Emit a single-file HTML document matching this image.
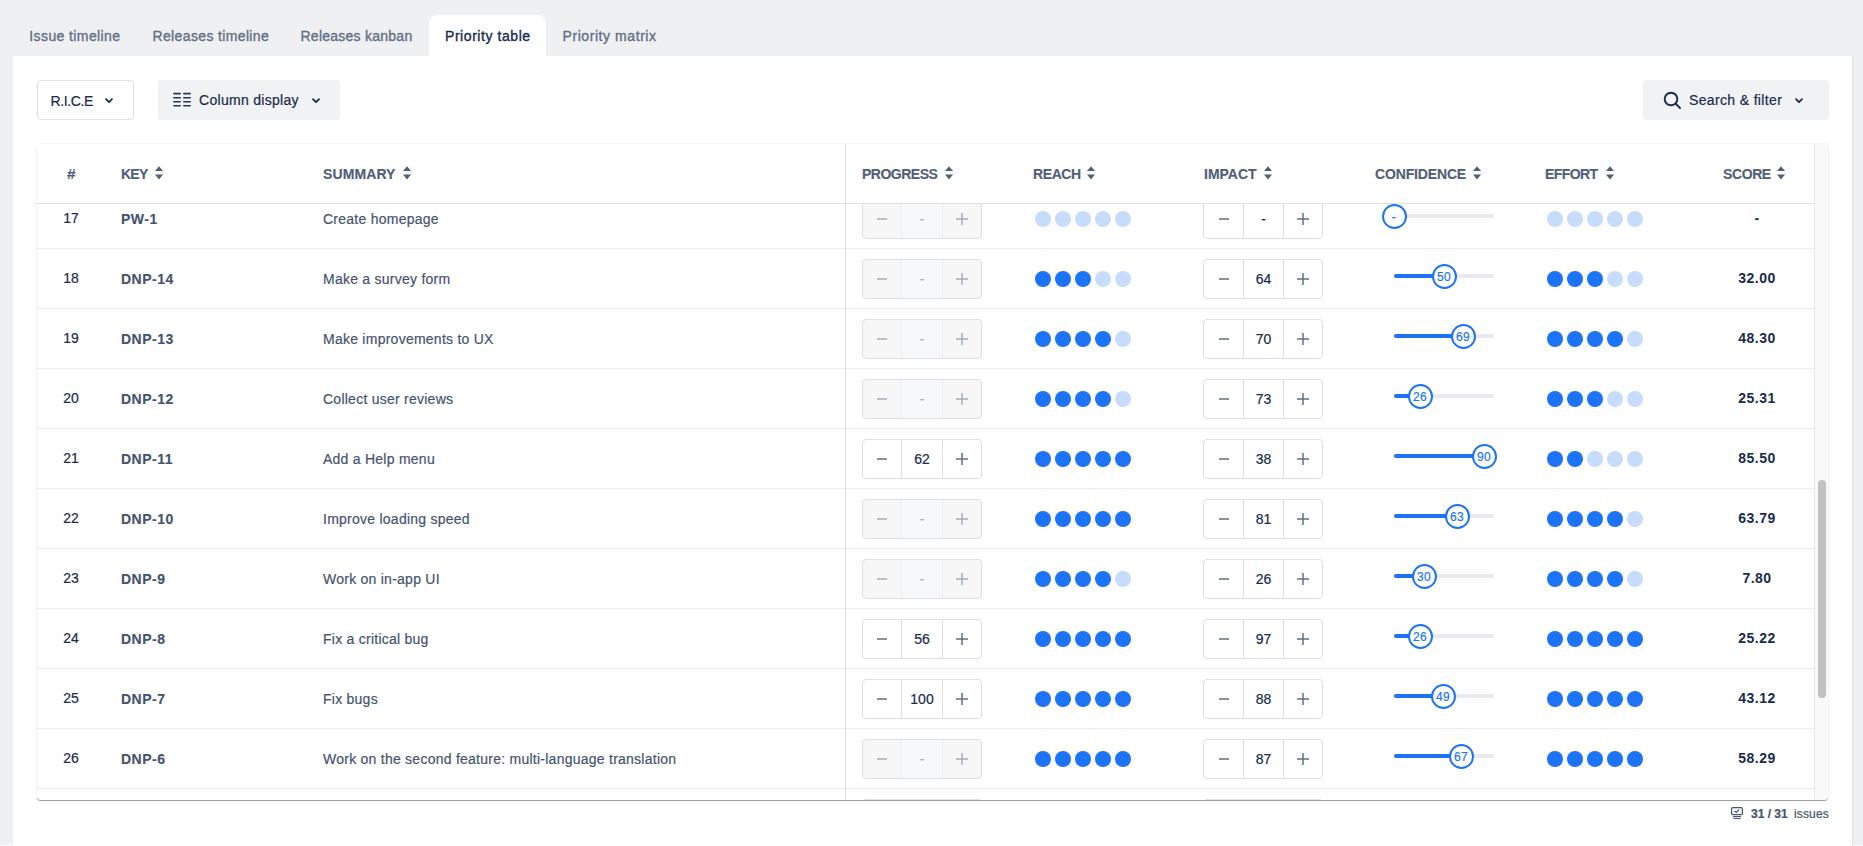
<!DOCTYPE html>
<html><head><meta charset="utf-8">
<style>
*{box-sizing:border-box;}
html,body{margin:0;padding:0;}
body{width:1863px;height:846px;overflow:hidden;position:relative;background:#eef0f2;font-family:"Liberation Sans",sans-serif;font-size:14px;color:#172b4d;-webkit-text-stroke:0.2px currentColor;}
.hcell,.key{-webkit-text-stroke:0.15px currentColor;} .score{-webkit-text-stroke:0;}
.abs{position:absolute;}
.tabbg{position:absolute;left:429px;top:15px;width:117px;height:41px;background:#fff;border-radius:8px 8px 0 0;}
.tab{position:absolute;top:28px;line-height:16px;color:#626f86;font-size:14px;white-space:nowrap;-webkit-text-stroke:0.35px currentColor;}
.tab.act{color:#172b4d;}
.panel{position:absolute;left:13px;top:56px;width:1839px;height:790px;background:#fff;}
.btn{position:absolute;top:80px;height:40px;border-radius:3px;color:#172b4d;font-size:14px;white-space:nowrap;}
.btn span{position:absolute;top:12px;line-height:16px;}
.card{position:absolute;left:37px;top:144px;width:1791px;height:656px;background:#fff;border-radius:4px;box-shadow:0 1px 0.5px rgba(0,0,0,0.33),0 1px 3px rgba(0,0,0,0.05),0 0 1.5px rgba(0,0,0,0.17);overflow:hidden;}
.wrap{position:absolute;left:-37px;top:-144px;width:1863px;height:846px;}
.hdr{position:absolute;top:0;height:60px;left:0;right:0;background:#fff;z-index:5;border-bottom:1px solid #dcdfe4;}
.hcell{position:absolute;top:166px;line-height:16px;font-weight:700;font-size:14px;color:#505f79;white-space:nowrap;}
.sort{position:absolute;top:166px;width:8px;height:14px;color:#505f79;line-height:0;}
.rowline{position:absolute;left:37px;width:1777px;height:1px;background:#ebecf0;}
.num{position:absolute;left:61px;width:20px;text-align:center;line-height:16px;color:#172b4d;}
.key{position:absolute;left:121px;line-height:16px;font-weight:700;color:#44546f;letter-spacing:0.5px;}
.summ{position:absolute;left:323px;line-height:16px;color:#44546f;letter-spacing:0.25px;white-space:nowrap;}
.stp{position:absolute;width:120px;height:40px;border:1px solid #dcdfe4;border-radius:4px;display:flex;overflow:hidden;background:#fff;}
.stp .sb{width:38px;height:38px;display:flex;align-items:center;justify-content:center;color:#626f86;}
.stp .sv{width:42px;height:38px;border-left:1px solid #dcdfe4;border-right:1px solid #dcdfe4;text-align:center;line-height:38px;color:#172b4d;}
.stp.dis{background:#f7f7f8;}
.stp.dis .sb{color:#a5adba;}
.stp.dis .sv{background:#f7f8fa;color:#a5adba;border-color:#ebecf0;}
.dots{position:absolute;height:16px;display:flex;gap:4px;}
.dots i{display:block;width:16px;height:16px;border-radius:50%;}
.dots i.on{background:#1d73f5;}
.dots i.off{background:#c7dcfb;}
.trk{position:absolute;left:1394px;width:100px;height:4px;border-radius:2px;background:#e9eaee;}
.fill{position:absolute;left:1394px;height:4px;border-radius:2px;background:#1d73f5;}
.thumb{position:absolute;width:25px;height:25px;border-radius:50%;border:2px solid #1d73f5;background:#fff;color:#1d73f5;font-size:12px;line-height:22px;text-align:center;letter-spacing:0.3px;}
.score{position:absolute;left:1700px;width:114px;text-align:center;line-height:16px;font-weight:700;color:#172b4d;letter-spacing:0.5px;}
.vdiv{position:absolute;left:808px;top:0;width:1px;height:656px;background:#dcdfe4;z-index:6;}
.sbtrack{position:absolute;left:1777px;top:0;width:14px;height:656px;background:#f9f9f9;border-left:1px solid #e8e8e8;z-index:7;}
.sbthumb{position:absolute;left:3px;top:336px;width:8px;height:218px;border-radius:4px;background:#c1c1c1;}
.foot{position:absolute;top:806px;left:1731px;height:14px;font-size:12px;color:#44546f;white-space:nowrap;}
.foot span{position:absolute;top:1px;line-height:14px;}
</style></head><body>
<div class="panel"></div>
<div class="abs" style="left:1852px;top:56px;width:1px;height:789px;background:#dfe0e4"></div>
<div class="abs" style="left:0;top:845px;width:1863px;height:1px;background:#fff"></div>
<div class="tabbg"></div>
<div class="tab" style="left:29.3px;letter-spacing:0.4px">Issue timeline</div>
<div class="tab" style="left:152.5px;letter-spacing:0.36px">Releases timeline</div>
<div class="tab" style="left:300.5px;letter-spacing:0.25px">Releases kanban</div>
<div class="tab act" style="left:445px;letter-spacing:0.56px">Priority table</div>
<div class="tab" style="left:562.5px;letter-spacing:0.57px">Priority matrix</div>

<div class="btn" style="left:37px;width:97px;border:1px solid #dcdfe4;border-radius:4px;">
  <span style="left:12.5px;top:12px;letter-spacing:-0.4px">R.I.C.E</span>
  <div class="abs" style="left:66px;top:16px;line-height:0"><svg width="10" height="8" viewBox="0 0 10 8"><path d="M2 2.2 L5 5.2 L8 2.2" stroke="#172b4d" stroke-width="1.8" fill="none" stroke-linecap="round" stroke-linejoin="round"/></svg></div>
</div>
<div class="btn" style="left:158px;width:182px;background:#f1f2f4;">
  <svg class="abs" style="left:15px;top:12px" width="18" height="15" viewBox="0 0 18 15"><g fill="#253858"><rect x="0" y="0.8" width="8" height="1.6" rx="0.8"/><rect x="0" y="4.9" width="8" height="1.6" rx="0.8"/><rect x="0" y="8.9" width="8" height="1.6" rx="0.8"/><rect x="0" y="13" width="8" height="1.6" rx="0.8"/><rect x="10" y="0.8" width="8" height="1.6" rx="0.8"/><rect x="10" y="4.9" width="8" height="1.6" rx="0.8"/><rect x="10" y="8.9" width="8" height="1.6" rx="0.8"/><rect x="10" y="13" width="8" height="1.6" rx="0.8"/></g></svg>
  <span style="left:41px;letter-spacing:0.3px">Column display</span>
  <div class="abs" style="left:153px;top:17px;line-height:0"><svg width="10" height="8" viewBox="0 0 10 8"><path d="M2 2.2 L5 5.2 L8 2.2" stroke="#172b4d" stroke-width="1.8" fill="none" stroke-linecap="round" stroke-linejoin="round"/></svg></div>
</div>
<div class="btn" style="left:1643px;width:186px;background:#f1f2f4;">
  <svg class="abs" style="left:20px;top:11px" width="19" height="19" viewBox="0 0 19 19"><circle cx="8" cy="8" r="6.3" stroke="#172b4d" stroke-width="1.9" fill="none"/><path d="M12.6 12.6 L17 17" stroke="#172b4d" stroke-width="1.9" stroke-linecap="round"/></svg>
  <span style="left:46px;letter-spacing:0.35px">Search &amp; filter</span>
  <div class="abs" style="left:151px;top:17px;line-height:0"><svg width="10" height="8" viewBox="0 0 10 8"><path d="M2 2.2 L5 5.2 L8 2.2" stroke="#172b4d" stroke-width="1.8" fill="none" stroke-linecap="round" stroke-linejoin="round"/></svg></div>
</div>

<div class="card">
  <div class="wrap">
<div class="rowline" style="top:248px"></div>
<div class="num" style="top:210px">17</div>
<div class="key" style="top:211px">PW-1</div>
<div class="summ" style="top:211px">Create homepage</div>
<div class="stp dis" style="left:862px;top:199px"><div class="sb" style="width:38px"><svg width="12" height="12" viewBox="0 0 12 12"><rect x="1" y="5.25" width="10" height="1.5" fill="currentColor"/></svg></div><div class="sv" style="width:42px">-</div><div class="sb"><svg width="12" height="12" viewBox="0 0 12 12"><rect x="0" y="5.25" width="12" height="1.5" fill="currentColor"/><rect x="5.25" y="0" width="1.5" height="12" fill="currentColor"/></svg></div></div>
<div class="dots" style="left:1035px;top:211px"><i class="off"></i><i class="off"></i><i class="off"></i><i class="off"></i><i class="off"></i></div>
<div class="stp" style="left:1203px;top:199px"><div class="sb" style="width:39px"><svg width="12" height="12" viewBox="0 0 12 12"><rect x="1" y="5.25" width="10" height="1.5" fill="currentColor"/></svg></div><div class="sv" style="width:41px">-</div><div class="sb"><svg width="12" height="12" viewBox="0 0 12 12"><rect x="0" y="5.25" width="12" height="1.5" fill="currentColor"/><rect x="5.25" y="0" width="1.5" height="12" fill="currentColor"/></svg></div></div>
<div class="trk" style="top:214px"></div><div class="thumb" style="left:1381.5px;top:203.5px">-</div>
<div class="dots" style="left:1547px;top:211px"><i class="off"></i><i class="off"></i><i class="off"></i><i class="off"></i><i class="off"></i></div>
<div class="score" style="top:210px">-</div>
<div class="rowline" style="top:308px"></div>
<div class="num" style="top:270px">18</div>
<div class="key" style="top:271px">DNP-14</div>
<div class="summ" style="top:271px">Make a survey form</div>
<div class="stp dis" style="left:862px;top:259px"><div class="sb" style="width:38px"><svg width="12" height="12" viewBox="0 0 12 12"><rect x="1" y="5.25" width="10" height="1.5" fill="currentColor"/></svg></div><div class="sv" style="width:42px">-</div><div class="sb"><svg width="12" height="12" viewBox="0 0 12 12"><rect x="0" y="5.25" width="12" height="1.5" fill="currentColor"/><rect x="5.25" y="0" width="1.5" height="12" fill="currentColor"/></svg></div></div>
<div class="dots" style="left:1035px;top:271px"><i class="on"></i><i class="on"></i><i class="on"></i><i class="off"></i><i class="off"></i></div>
<div class="stp" style="left:1203px;top:259px"><div class="sb" style="width:39px"><svg width="12" height="12" viewBox="0 0 12 12"><rect x="1" y="5.25" width="10" height="1.5" fill="currentColor"/></svg></div><div class="sv" style="width:41px">64</div><div class="sb"><svg width="12" height="12" viewBox="0 0 12 12"><rect x="0" y="5.25" width="12" height="1.5" fill="currentColor"/><rect x="5.25" y="0" width="1.5" height="12" fill="currentColor"/></svg></div></div>
<div class="trk" style="top:274px"></div><div class="fill" style="top:274px;width:52px"></div><div class="thumb" style="left:1431.5px;top:263.5px">50</div>
<div class="dots" style="left:1547px;top:271px"><i class="on"></i><i class="on"></i><i class="on"></i><i class="off"></i><i class="off"></i></div>
<div class="score" style="top:270px">32.00</div>
<div class="rowline" style="top:368px"></div>
<div class="num" style="top:330px">19</div>
<div class="key" style="top:331px">DNP-13</div>
<div class="summ" style="top:331px">Make improvements to UX</div>
<div class="stp dis" style="left:862px;top:319px"><div class="sb" style="width:38px"><svg width="12" height="12" viewBox="0 0 12 12"><rect x="1" y="5.25" width="10" height="1.5" fill="currentColor"/></svg></div><div class="sv" style="width:42px">-</div><div class="sb"><svg width="12" height="12" viewBox="0 0 12 12"><rect x="0" y="5.25" width="12" height="1.5" fill="currentColor"/><rect x="5.25" y="0" width="1.5" height="12" fill="currentColor"/></svg></div></div>
<div class="dots" style="left:1035px;top:331px"><i class="on"></i><i class="on"></i><i class="on"></i><i class="on"></i><i class="off"></i></div>
<div class="stp" style="left:1203px;top:319px"><div class="sb" style="width:39px"><svg width="12" height="12" viewBox="0 0 12 12"><rect x="1" y="5.25" width="10" height="1.5" fill="currentColor"/></svg></div><div class="sv" style="width:41px">70</div><div class="sb"><svg width="12" height="12" viewBox="0 0 12 12"><rect x="0" y="5.25" width="12" height="1.5" fill="currentColor"/><rect x="5.25" y="0" width="1.5" height="12" fill="currentColor"/></svg></div></div>
<div class="trk" style="top:334px"></div><div class="fill" style="top:334px;width:71px"></div><div class="thumb" style="left:1450.5px;top:323.5px">69</div>
<div class="dots" style="left:1547px;top:331px"><i class="on"></i><i class="on"></i><i class="on"></i><i class="on"></i><i class="off"></i></div>
<div class="score" style="top:330px">48.30</div>
<div class="rowline" style="top:428px"></div>
<div class="num" style="top:390px">20</div>
<div class="key" style="top:391px">DNP-12</div>
<div class="summ" style="top:391px">Collect user reviews</div>
<div class="stp dis" style="left:862px;top:379px"><div class="sb" style="width:38px"><svg width="12" height="12" viewBox="0 0 12 12"><rect x="1" y="5.25" width="10" height="1.5" fill="currentColor"/></svg></div><div class="sv" style="width:42px">-</div><div class="sb"><svg width="12" height="12" viewBox="0 0 12 12"><rect x="0" y="5.25" width="12" height="1.5" fill="currentColor"/><rect x="5.25" y="0" width="1.5" height="12" fill="currentColor"/></svg></div></div>
<div class="dots" style="left:1035px;top:391px"><i class="on"></i><i class="on"></i><i class="on"></i><i class="on"></i><i class="off"></i></div>
<div class="stp" style="left:1203px;top:379px"><div class="sb" style="width:39px"><svg width="12" height="12" viewBox="0 0 12 12"><rect x="1" y="5.25" width="10" height="1.5" fill="currentColor"/></svg></div><div class="sv" style="width:41px">73</div><div class="sb"><svg width="12" height="12" viewBox="0 0 12 12"><rect x="0" y="5.25" width="12" height="1.5" fill="currentColor"/><rect x="5.25" y="0" width="1.5" height="12" fill="currentColor"/></svg></div></div>
<div class="trk" style="top:394px"></div><div class="fill" style="top:394px;width:28px"></div><div class="thumb" style="left:1407.5px;top:383.5px">26</div>
<div class="dots" style="left:1547px;top:391px"><i class="on"></i><i class="on"></i><i class="on"></i><i class="off"></i><i class="off"></i></div>
<div class="score" style="top:390px">25.31</div>
<div class="rowline" style="top:488px"></div>
<div class="num" style="top:450px">21</div>
<div class="key" style="top:451px">DNP-11</div>
<div class="summ" style="top:451px">Add a Help menu</div>
<div class="stp" style="left:862px;top:439px"><div class="sb" style="width:38px"><svg width="12" height="12" viewBox="0 0 12 12"><rect x="1" y="5.25" width="10" height="1.5" fill="currentColor"/></svg></div><div class="sv" style="width:42px">62</div><div class="sb"><svg width="12" height="12" viewBox="0 0 12 12"><rect x="0" y="5.25" width="12" height="1.5" fill="currentColor"/><rect x="5.25" y="0" width="1.5" height="12" fill="currentColor"/></svg></div></div>
<div class="dots" style="left:1035px;top:451px"><i class="on"></i><i class="on"></i><i class="on"></i><i class="on"></i><i class="on"></i></div>
<div class="stp" style="left:1203px;top:439px"><div class="sb" style="width:39px"><svg width="12" height="12" viewBox="0 0 12 12"><rect x="1" y="5.25" width="10" height="1.5" fill="currentColor"/></svg></div><div class="sv" style="width:41px">38</div><div class="sb"><svg width="12" height="12" viewBox="0 0 12 12"><rect x="0" y="5.25" width="12" height="1.5" fill="currentColor"/><rect x="5.25" y="0" width="1.5" height="12" fill="currentColor"/></svg></div></div>
<div class="trk" style="top:454px"></div><div class="fill" style="top:454px;width:92px"></div><div class="thumb" style="left:1471.5px;top:443.5px">90</div>
<div class="dots" style="left:1547px;top:451px"><i class="on"></i><i class="on"></i><i class="off"></i><i class="off"></i><i class="off"></i></div>
<div class="score" style="top:450px">85.50</div>
<div class="rowline" style="top:548px"></div>
<div class="num" style="top:510px">22</div>
<div class="key" style="top:511px">DNP-10</div>
<div class="summ" style="top:511px">Improve loading speed</div>
<div class="stp dis" style="left:862px;top:499px"><div class="sb" style="width:38px"><svg width="12" height="12" viewBox="0 0 12 12"><rect x="1" y="5.25" width="10" height="1.5" fill="currentColor"/></svg></div><div class="sv" style="width:42px">-</div><div class="sb"><svg width="12" height="12" viewBox="0 0 12 12"><rect x="0" y="5.25" width="12" height="1.5" fill="currentColor"/><rect x="5.25" y="0" width="1.5" height="12" fill="currentColor"/></svg></div></div>
<div class="dots" style="left:1035px;top:511px"><i class="on"></i><i class="on"></i><i class="on"></i><i class="on"></i><i class="on"></i></div>
<div class="stp" style="left:1203px;top:499px"><div class="sb" style="width:39px"><svg width="12" height="12" viewBox="0 0 12 12"><rect x="1" y="5.25" width="10" height="1.5" fill="currentColor"/></svg></div><div class="sv" style="width:41px">81</div><div class="sb"><svg width="12" height="12" viewBox="0 0 12 12"><rect x="0" y="5.25" width="12" height="1.5" fill="currentColor"/><rect x="5.25" y="0" width="1.5" height="12" fill="currentColor"/></svg></div></div>
<div class="trk" style="top:514px"></div><div class="fill" style="top:514px;width:65px"></div><div class="thumb" style="left:1444.5px;top:503.5px">63</div>
<div class="dots" style="left:1547px;top:511px"><i class="on"></i><i class="on"></i><i class="on"></i><i class="on"></i><i class="off"></i></div>
<div class="score" style="top:510px">63.79</div>
<div class="rowline" style="top:608px"></div>
<div class="num" style="top:570px">23</div>
<div class="key" style="top:571px">DNP-9</div>
<div class="summ" style="top:571px">Work on in-app UI</div>
<div class="stp dis" style="left:862px;top:559px"><div class="sb" style="width:38px"><svg width="12" height="12" viewBox="0 0 12 12"><rect x="1" y="5.25" width="10" height="1.5" fill="currentColor"/></svg></div><div class="sv" style="width:42px">-</div><div class="sb"><svg width="12" height="12" viewBox="0 0 12 12"><rect x="0" y="5.25" width="12" height="1.5" fill="currentColor"/><rect x="5.25" y="0" width="1.5" height="12" fill="currentColor"/></svg></div></div>
<div class="dots" style="left:1035px;top:571px"><i class="on"></i><i class="on"></i><i class="on"></i><i class="on"></i><i class="off"></i></div>
<div class="stp" style="left:1203px;top:559px"><div class="sb" style="width:39px"><svg width="12" height="12" viewBox="0 0 12 12"><rect x="1" y="5.25" width="10" height="1.5" fill="currentColor"/></svg></div><div class="sv" style="width:41px">26</div><div class="sb"><svg width="12" height="12" viewBox="0 0 12 12"><rect x="0" y="5.25" width="12" height="1.5" fill="currentColor"/><rect x="5.25" y="0" width="1.5" height="12" fill="currentColor"/></svg></div></div>
<div class="trk" style="top:574px"></div><div class="fill" style="top:574px;width:32px"></div><div class="thumb" style="left:1411.5px;top:563.5px">30</div>
<div class="dots" style="left:1547px;top:571px"><i class="on"></i><i class="on"></i><i class="on"></i><i class="on"></i><i class="off"></i></div>
<div class="score" style="top:570px">7.80</div>
<div class="rowline" style="top:668px"></div>
<div class="num" style="top:630px">24</div>
<div class="key" style="top:631px">DNP-8</div>
<div class="summ" style="top:631px">Fix a critical bug</div>
<div class="stp" style="left:862px;top:619px"><div class="sb" style="width:38px"><svg width="12" height="12" viewBox="0 0 12 12"><rect x="1" y="5.25" width="10" height="1.5" fill="currentColor"/></svg></div><div class="sv" style="width:42px">56</div><div class="sb"><svg width="12" height="12" viewBox="0 0 12 12"><rect x="0" y="5.25" width="12" height="1.5" fill="currentColor"/><rect x="5.25" y="0" width="1.5" height="12" fill="currentColor"/></svg></div></div>
<div class="dots" style="left:1035px;top:631px"><i class="on"></i><i class="on"></i><i class="on"></i><i class="on"></i><i class="on"></i></div>
<div class="stp" style="left:1203px;top:619px"><div class="sb" style="width:39px"><svg width="12" height="12" viewBox="0 0 12 12"><rect x="1" y="5.25" width="10" height="1.5" fill="currentColor"/></svg></div><div class="sv" style="width:41px">97</div><div class="sb"><svg width="12" height="12" viewBox="0 0 12 12"><rect x="0" y="5.25" width="12" height="1.5" fill="currentColor"/><rect x="5.25" y="0" width="1.5" height="12" fill="currentColor"/></svg></div></div>
<div class="trk" style="top:634px"></div><div class="fill" style="top:634px;width:28px"></div><div class="thumb" style="left:1407.5px;top:623.5px">26</div>
<div class="dots" style="left:1547px;top:631px"><i class="on"></i><i class="on"></i><i class="on"></i><i class="on"></i><i class="on"></i></div>
<div class="score" style="top:630px">25.22</div>
<div class="rowline" style="top:728px"></div>
<div class="num" style="top:690px">25</div>
<div class="key" style="top:691px">DNP-7</div>
<div class="summ" style="top:691px">Fix bugs</div>
<div class="stp" style="left:862px;top:679px"><div class="sb" style="width:38px"><svg width="12" height="12" viewBox="0 0 12 12"><rect x="1" y="5.25" width="10" height="1.5" fill="currentColor"/></svg></div><div class="sv" style="width:42px">100</div><div class="sb"><svg width="12" height="12" viewBox="0 0 12 12"><rect x="0" y="5.25" width="12" height="1.5" fill="currentColor"/><rect x="5.25" y="0" width="1.5" height="12" fill="currentColor"/></svg></div></div>
<div class="dots" style="left:1035px;top:691px"><i class="on"></i><i class="on"></i><i class="on"></i><i class="on"></i><i class="on"></i></div>
<div class="stp" style="left:1203px;top:679px"><div class="sb" style="width:39px"><svg width="12" height="12" viewBox="0 0 12 12"><rect x="1" y="5.25" width="10" height="1.5" fill="currentColor"/></svg></div><div class="sv" style="width:41px">88</div><div class="sb"><svg width="12" height="12" viewBox="0 0 12 12"><rect x="0" y="5.25" width="12" height="1.5" fill="currentColor"/><rect x="5.25" y="0" width="1.5" height="12" fill="currentColor"/></svg></div></div>
<div class="trk" style="top:694px"></div><div class="fill" style="top:694px;width:51px"></div><div class="thumb" style="left:1430.5px;top:683.5px">49</div>
<div class="dots" style="left:1547px;top:691px"><i class="on"></i><i class="on"></i><i class="on"></i><i class="on"></i><i class="on"></i></div>
<div class="score" style="top:690px">43.12</div>
<div class="rowline" style="top:788px"></div>
<div class="num" style="top:750px">26</div>
<div class="key" style="top:751px">DNP-6</div>
<div class="summ" style="top:751px">Work on the second feature: multi-language translation</div>
<div class="stp dis" style="left:862px;top:739px"><div class="sb" style="width:38px"><svg width="12" height="12" viewBox="0 0 12 12"><rect x="1" y="5.25" width="10" height="1.5" fill="currentColor"/></svg></div><div class="sv" style="width:42px">-</div><div class="sb"><svg width="12" height="12" viewBox="0 0 12 12"><rect x="0" y="5.25" width="12" height="1.5" fill="currentColor"/><rect x="5.25" y="0" width="1.5" height="12" fill="currentColor"/></svg></div></div>
<div class="dots" style="left:1035px;top:751px"><i class="on"></i><i class="on"></i><i class="on"></i><i class="on"></i><i class="on"></i></div>
<div class="stp" style="left:1203px;top:739px"><div class="sb" style="width:39px"><svg width="12" height="12" viewBox="0 0 12 12"><rect x="1" y="5.25" width="10" height="1.5" fill="currentColor"/></svg></div><div class="sv" style="width:41px">87</div><div class="sb"><svg width="12" height="12" viewBox="0 0 12 12"><rect x="0" y="5.25" width="12" height="1.5" fill="currentColor"/><rect x="5.25" y="0" width="1.5" height="12" fill="currentColor"/></svg></div></div>
<div class="trk" style="top:754px"></div><div class="fill" style="top:754px;width:69px"></div><div class="thumb" style="left:1448.5px;top:743.5px">67</div>
<div class="dots" style="left:1547px;top:751px"><i class="on"></i><i class="on"></i><i class="on"></i><i class="on"></i><i class="on"></i></div>
<div class="score" style="top:750px">58.29</div>
<div class="rowline" style="top:848px"></div>
<div class="num" style="top:810px">27</div>
<div class="key" style="top:811px">DNP-5</div>
<div class="summ" style="top:811px"></div>
<div class="stp dis" style="left:862px;top:799px"><div class="sb" style="width:38px"><svg width="12" height="12" viewBox="0 0 12 12"><rect x="1" y="5.25" width="10" height="1.5" fill="currentColor"/></svg></div><div class="sv" style="width:42px">-</div><div class="sb"><svg width="12" height="12" viewBox="0 0 12 12"><rect x="0" y="5.25" width="12" height="1.5" fill="currentColor"/><rect x="5.25" y="0" width="1.5" height="12" fill="currentColor"/></svg></div></div>
<div class="dots" style="left:1035px;top:811px"><i class="on"></i><i class="on"></i><i class="on"></i><i class="on"></i><i class="on"></i></div>
<div class="stp" style="left:1203px;top:799px"><div class="sb" style="width:39px"><svg width="12" height="12" viewBox="0 0 12 12"><rect x="1" y="5.25" width="10" height="1.5" fill="currentColor"/></svg></div><div class="sv" style="width:41px">80</div><div class="sb"><svg width="12" height="12" viewBox="0 0 12 12"><rect x="0" y="5.25" width="12" height="1.5" fill="currentColor"/><rect x="5.25" y="0" width="1.5" height="12" fill="currentColor"/></svg></div></div>
<div class="trk" style="top:814px"></div><div class="fill" style="top:814px;width:52px"></div><div class="thumb" style="left:1431.5px;top:803.5px">50</div>
<div class="dots" style="left:1547px;top:811px"><i class="on"></i><i class="on"></i><i class="on"></i><i class="on"></i><i class="on"></i></div>
<div class="score" style="top:810px"></div>
  </div>
  <div class="hdr"><div class="wrap">
<div class="hcell" style="left:67px;letter-spacing:0px;font-size:15.5px;top:166px">#</div>
<div class="hcell" style="left:121px;letter-spacing:-0.75px">KEY</div>
<div class="sort" style="left:155px"><svg width="8" height="14" viewBox="0 0 8 14"><path d="M4 0.3 L8 5 L0 5 Z" fill="currentColor"/><path d="M0 8.6 L8 8.6 L4 13.4 Z" fill="currentColor"/></svg></div>
<div class="hcell" style="left:323px;letter-spacing:0.1px">SUMMARY</div>
<div class="sort" style="left:403px"><svg width="8" height="14" viewBox="0 0 8 14"><path d="M4 0.3 L8 5 L0 5 Z" fill="currentColor"/><path d="M0 8.6 L8 8.6 L4 13.4 Z" fill="currentColor"/></svg></div>
<div class="hcell" style="left:862px;letter-spacing:-0.5px">PROGRESS</div>
<div class="sort" style="left:945px"><svg width="8" height="14" viewBox="0 0 8 14"><path d="M4 0.3 L8 5 L0 5 Z" fill="currentColor"/><path d="M0 8.6 L8 8.6 L4 13.4 Z" fill="currentColor"/></svg></div>
<div class="hcell" style="left:1033px;letter-spacing:-0.4px">REACH</div>
<div class="sort" style="left:1087px"><svg width="8" height="14" viewBox="0 0 8 14"><path d="M4 0.3 L8 5 L0 5 Z" fill="currentColor"/><path d="M0 8.6 L8 8.6 L4 13.4 Z" fill="currentColor"/></svg></div>
<div class="hcell" style="left:1204px;letter-spacing:0px">IMPACT</div>
<div class="sort" style="left:1264px"><svg width="8" height="14" viewBox="0 0 8 14"><path d="M4 0.3 L8 5 L0 5 Z" fill="currentColor"/><path d="M0 8.6 L8 8.6 L4 13.4 Z" fill="currentColor"/></svg></div>
<div class="hcell" style="left:1375px;letter-spacing:-0.15px">CONFIDENCE</div>
<div class="sort" style="left:1473px"><svg width="8" height="14" viewBox="0 0 8 14"><path d="M4 0.3 L8 5 L0 5 Z" fill="currentColor"/><path d="M0 8.6 L8 8.6 L4 13.4 Z" fill="currentColor"/></svg></div>
<div class="hcell" style="left:1545px;letter-spacing:-0.6px">EFFORT</div>
<div class="sort" style="left:1606px"><svg width="8" height="14" viewBox="0 0 8 14"><path d="M4 0.3 L8 5 L0 5 Z" fill="currentColor"/><path d="M0 8.6 L8 8.6 L4 13.4 Z" fill="currentColor"/></svg></div>
<div class="hcell" style="left:1723px;letter-spacing:-0.4px">SCORE</div>
<div class="sort" style="left:1777px"><svg width="8" height="14" viewBox="0 0 8 14"><path d="M4 0.3 L8 5 L0 5 Z" fill="currentColor"/><path d="M0 8.6 L8 8.6 L4 13.4 Z" fill="currentColor"/></svg></div>
  </div></div>
  <div class="vdiv"></div>
  <div class="sbtrack"><div class="sbthumb"></div></div>
</div>
<div class="foot">
  <svg class="abs" style="left:0;top:1px" width="12" height="12" viewBox="0 0 12 12"><g fill="none" stroke="#44546f" stroke-width="1.2"><rect x="0.6" y="0.6" width="10.8" height="7" rx="1.2"/><path d="M3.8 4.2 L5.3 5.5 L7.8 2.8" stroke-linecap="round"/></g><rect x="2" y="9" width="8" height="1.1" fill="#44546f"/><rect x="2.5" y="11" width="7" height="1" fill="#44546f"/></svg>
  <span style="left:20px;font-weight:700">31 / 31</span>
  <span style="left:63px;letter-spacing:0.15px">issues</span>
</div>
</body></html>
